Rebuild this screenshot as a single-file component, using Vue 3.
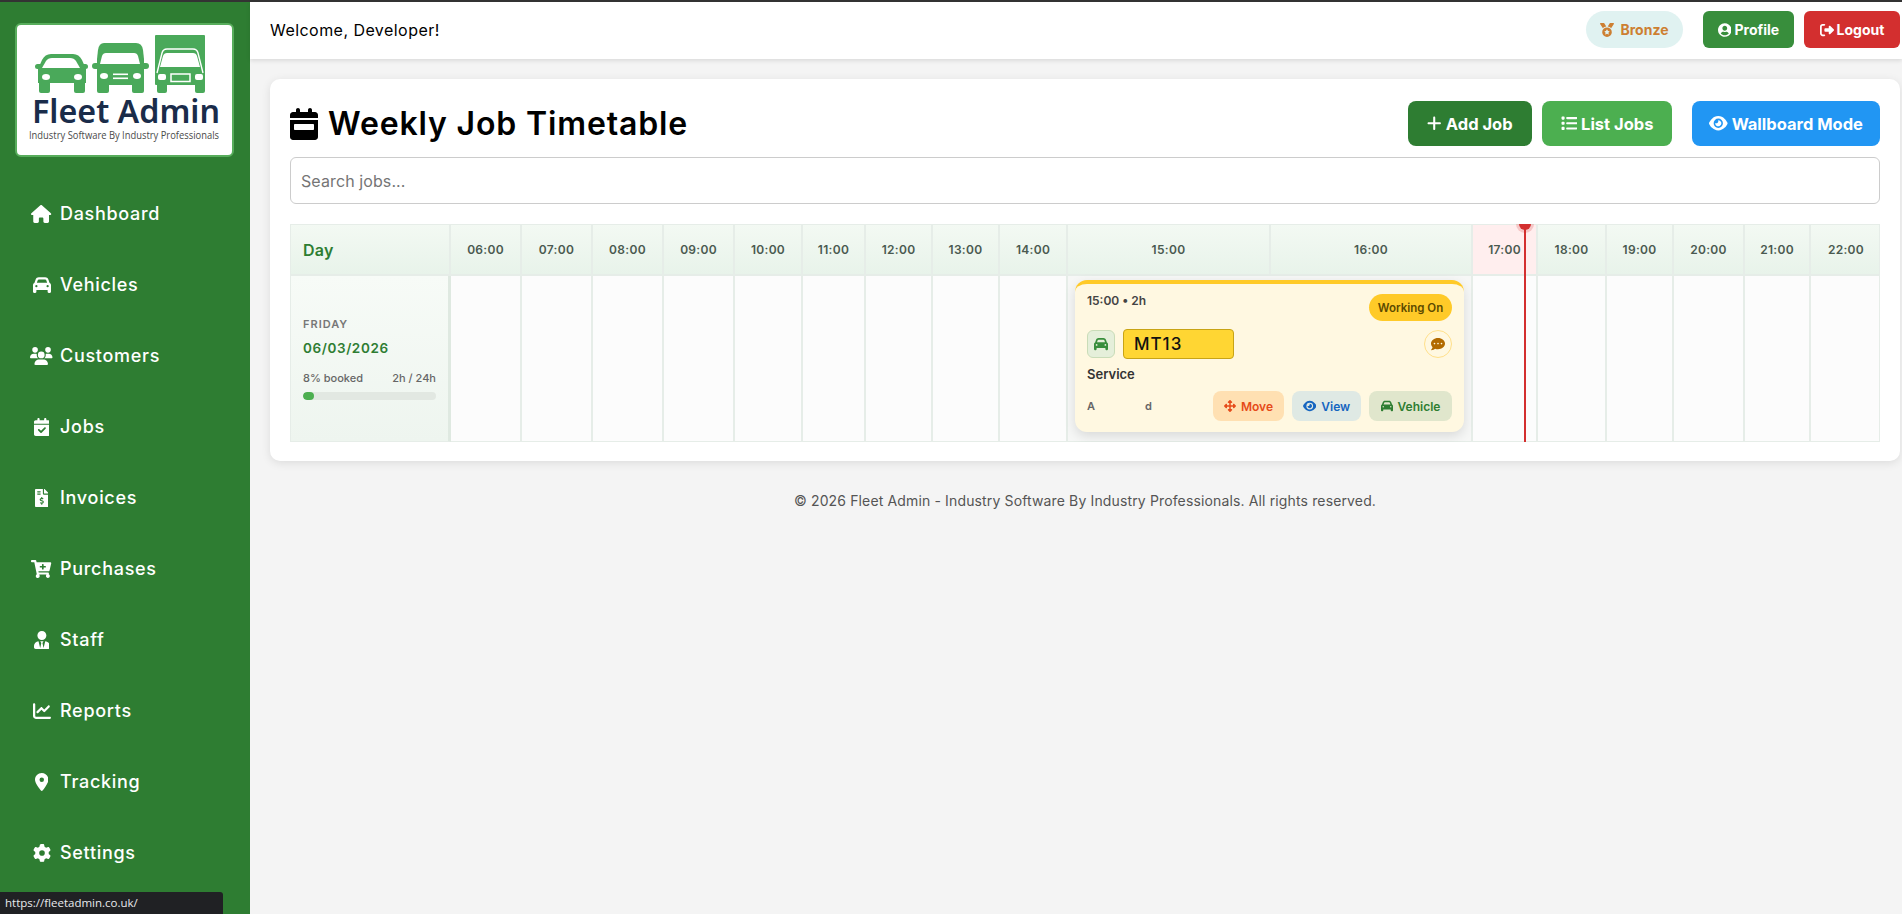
<script setup>
import { h } from "vue";

const icons = {
  home: [576, 512, "M575.8 255.5c0 18-15 32.1-32 32.1h-32l.7 160.2c0 2.7-.2 5.4-.5 8.1V472c0 22.1-17.9 40-40 40H456c-1.1 0-2.2 0-3.3-.1c-1.4 .1-2.8 .1-4.2 .1H416 392c-22.1 0-40-17.9-40-40V448 384c0-17.7-14.3-32-32-32H256c-17.7 0-32 14.3-32 32v64 24c0 22.1-17.9 40-40 40H160 128.1c-1.5 0-3-.1-4.5-.2c-1.2 .1-2.4 .2-3.6 .2H104c-22.1 0-40-17.9-40-40V360c0-.9 0-1.9 .1-2.8V287.6H32c-18 0-32-14-32-32.1c0-9 3-17 10-24L266.4 8c7-7 15-8 22-8s15 2 21 7L564.8 231.5c8 7 12 15 11 24z"],
  car: [512, 512, "M135.2 117.4L109.1 192H402.9l-26.1-74.6C372.3 104.6 360.2 96 346.6 96H165.4c-13.6 0-25.7 8.6-30.2 21.4zM39.6 196.8L74.8 96.3C88.3 57.8 124.6 32 165.4 32H346.6c40.8 0 77.1 25.8 90.6 64.3l35.2 100.5c23.2 9.6 39.6 32.5 39.6 59.2V400v48c0 17.7-14.3 32-32 32H448c-17.7 0-32-14.3-32-32V400H96v48c0 17.7-14.3 32-32 32H32c-17.7 0-32-14.3-32-32V400 256c0-26.7 16.4-49.6 39.6-59.2zM128 288a32 32 0 1 0 -64 0 32 32 0 1 0 64 0zm288 32a32 32 0 1 0 0-64 32 32 0 1 0 0 64z"],
  users: [640, 512, "M144 0a80 80 0 1 1 0 160A80 80 0 1 1 144 0zM512 0a80 80 0 1 1 0 160A80 80 0 1 1 512 0zM0 298.7C0 239.8 47.8 192 106.7 192h42.7c15.9 0 31 3.5 44.6 9.7c-1.3 7.2-1.9 14.7-1.9 22.3c0 38.2 16.8 72.5 43.3 96c-.2 0-.4 0-.7 0H21.3C9.6 320 0 310.4 0 298.7zM405.3 320c-.2 0-.4 0-.7 0c26.6-23.5 43.3-57.8 43.3-96c0-7.6-.7-15-1.9-22.3c13.6-6.3 28.7-9.7 44.6-9.7h42.7C592.2 192 640 239.8 640 298.7c0 11.8-9.6 21.3-21.3 21.3H405.3zM224 224a96 96 0 1 1 192 0 96 96 0 1 1 -192 0zM128 485.3C128 411.7 187.7 352 261.3 352H378.7C452.3 352 512 411.7 512 485.3c0 14.7-11.9 26.7-26.7 26.7H154.7c-14.7 0-26.7-11.9-26.7-26.7z"],
  calendarCheck: [448, 512, "M128 0c17.7 0 32 14.3 32 32V64H288V32c0-17.7 14.3-32 32-32s32 14.3 32 32V64h48c26.5 0 48 21.5 48 48v48H0V112C0 85.5 21.5 64 48 64H96V32c0-17.7 14.3-32 32-32zM0 192H448V464c0 26.5-21.5 48-48 48H48c-26.5 0-48-21.5-48-48V192zM329 305c9.4-9.4 9.4-24.6 0-33.9s-24.6-9.4-33.9 0l-95 95-47-47c-9.4-9.4-24.6-9.4-33.9 0s-9.4 24.6 0 33.9l64 64c9.4 9.4 24.6 9.4 33.9 0L329 305z"],
  invoice: [384, 512, "M377 105L279.1 7c-4.5-4.5-10.6-7-17-7H256v128h128v-6.1c0-6.3-2.5-12.4-7-16.9zm-153 31V0H24C10.7 0 0 10.7 0 24v464c0 13.3 10.7 24 24 24h336c13.3 0 24-10.7 24-24V160H248c-13.2 0-24-10.8-24-24zM64 72c0-4.42 3.58-8 8-8h80c4.42 0 8 3.58 8 8v16c0 4.42-3.58 8-8 8H72c-4.42 0-8-3.58-8-8V72zm0 80v-16c0-4.42 3.58-8 8-8h80c4.42 0 8 3.58 8 8v16c0 4.42-3.58 8-8 8H72c-4.42 0-8-3.58-8-8zm144 263.88V440c0 4.42-3.58 8-8 8h-16c-4.42 0-8-3.58-8-8v-24.29c-11.29-.58-22.27-4.52-31.37-11.35-3.9-2.93-4.1-8.77-.57-12.14l11.75-11.21c2.77-2.64 6.89-2.76 10.13-.73 3.87 2.42 8.26 3.72 12.82 3.72h28.11c6.5 0 11.8-5.92 11.8-13.19 0-5.95-3.61-11.19-8.77-12.73l-45-13.5c-18.59-5.58-31.58-23.42-31.58-43.39 0-24.52 19.05-44.44 42.67-45.07V232c0-4.42 3.58-8 8-8h16c4.42 0 8 3.58 8 8v24.29c11.29.58 22.27 4.51 31.37 11.35 3.9 2.93 4.1 8.77.57 12.14l-11.75 11.21c-2.77 2.64-6.89 2.76-10.13.73-3.87-2.43-8.26-3.72-12.82-3.72h-28.11c-6.5 0-11.8 5.92-11.8 13.19 0 5.95 3.61 11.19 8.77 12.73l45 13.5c18.59 5.58 31.58 23.42 31.58 43.39 0 24.53-19.05 44.44-42.67 45.07z"],
  cart: [576, 512, "M504.717 320H211.572l6.545 32h268.418c15.401 0 26.816 14.301 23.403 29.319l-5.517 24.276C523.112 414.668 536 433.828 536 456c0 31.202-25.519 56.444-56.824 55.994-29.823-.429-54.35-24.631-55.155-54.447-.44-16.287 6.085-31.049 16.803-41.548H231.176C241.553 426.165 248 440.326 248 456c0 31.813-26.528 57.431-58.67 55.938-28.54-1.325-51.751-24.385-53.251-52.917-1.158-22.034 10.436-41.455 28.051-51.586L93.883 64H24C10.745 64 0 53.255 0 40V24C0 10.745 10.745 0 24 0h102.529c11.401 0 21.228 8.021 23.513 19.19L159.208 64H551.99c15.401 0 26.816 14.301 23.403 29.319l-47.273 208C525.637 312.246 515.923 320 504.717 320zM408 168h-48v-40c0-8.837-7.163-16-16-16h-16c-8.837 0-16 7.163-16 16v40h-48c-8.837 0-16 7.163-16 16v16c0 8.837 7.163 16 16 16h48v40c0 8.837 7.163 16 16 16h16c8.837 0 16-7.163 16-16v-40h48c8.837 0 16-7.163 16-16v-16c0-8.837-7.163-16-16-16z"],
  userTie: [448, 512, "M224 256c70.7 0 128-57.3 128-128S294.7 0 224 0 96 57.3 96 128s57.3 128 128 128zm95.8 32.6L272 480l-32-136 32-56h-96l32 56-32 136-47.8-191.4C56.9 292 0 350.3 0 422.4V464c0 26.5 21.5 48 48 48h352c26.5 0 48-21.5 48-48v-41.6c0-72.1-56.9-130.4-128.2-133.8z"],
  chart: [512, 512, "M64 64c0-17.7-14.3-32-32-32S0 46.3 0 64V400c0 44.2 35.8 80 80 80H480c17.7 0 32-14.3 32-32s-14.3-32-32-32H80c-8.8 0-16-7.2-16-16V64zm406.6 86.6c12.5-12.5 12.5-32.8 0-45.3s-32.8-12.5-45.3 0L320 210.7l-57.4-57.4c-12.5-12.5-32.8-12.5-45.3 0l-112 112c-12.5 12.5-12.5 32.8 0 45.3s32.8 12.5 45.3 0L240 221.3l57.4 57.4c12.5 12.5 32.8 12.5 45.3 0l128-128z"],
  pin: [384, 512, "M215.7 499.2C267 435 384 279.4 384 192C384 86 298 0 192 0S0 86 0 192c0 87.4 117 243 168.3 307.2c12.3 15.3 35.1 15.3 47.4 0zM192 128a64 64 0 1 1 0 128 64 64 0 1 1 0-128z"],
  cog: [512, 512, "M495.9 166.6c3.2 8.7 .5 18.4-6.4 24.6l-43.3 39.4c1.1 8.3 1.7 16.8 1.7 25.4s-.6 17.1-1.7 25.4l43.3 39.4c6.9 6.2 9.6 15.9 6.4 24.6c-4.4 11.9-9.7 23.3-15.8 34.3l-4.7 8.1c-6.6 11-14 21.4-22.1 31.2c-5.9 7.2-15.7 9.6-24.5 6.8l-55.7-17.7c-13.4 10.3-28.2 18.9-44 25.4l-12.5 57.1c-2 9.1-9 16.3-18.2 17.8c-13.8 2.3-28 3.5-42.5 3.5s-28.7-1.2-42.5-3.5c-9.2-1.5-16.2-8.7-18.2-17.8l-12.5-57.1c-15.8-6.5-30.6-15.1-44-25.4L83.1 425.9c-8.8 2.8-18.6 .3-24.5-6.8c-8.1-9.8-15.5-20.2-22.1-31.2l-4.7-8.1c-6.1-11-11.4-22.4-15.8-34.3c-3.2-8.7-.5-18.4 6.4-24.6l43.3-39.4C64.6 273.1 64 264.6 64 256s.6-17.1 1.7-25.4L22.4 191.2c-6.9-6.2-9.6-15.9-6.4-24.6c4.4-11.9 9.7-23.3 15.8-34.3l4.7-8.1c6.6-11 14-21.4 22.1-31.2c5.9-7.2 15.7-9.6 24.5-6.8l55.7 17.7c13.4-10.3 28.2-18.9 44-25.4l12.5-57.1c2-9.1 9-16.3 18.2-17.8C227.3 1.2 241.5 0 256 0s28.7 1.2 42.5 3.5c9.2 1.5 16.2 8.7 18.2 17.8l12.5 57.1c15.8 6.5 30.6 15.1 44 25.4l55.7-17.7c8.8-2.8 18.6-.3 24.5 6.8c8.1 9.8 15.5 20.2 22.1 31.2l4.7 8.1c6.1 11 11.4 22.4 15.8 34.3zM256 336a80 80 0 1 0 0-160 80 80 0 1 0 0 160z"],
  week: [448, 512, "M128 0c17.7 0 32 14.3 32 32V64H288V32c0-17.7 14.3-32 32-32s32 14.3 32 32V64h48c26.5 0 48 21.5 48 48v48H0V112C0 85.5 21.5 64 48 64H96V32c0-17.7 14.3-32 32-32zM0 192H448V464c0 26.5-21.5 48-48 48H48c-26.5 0-48-21.5-48-48V192zm80 64c-8.8 0-16 7.2-16 16v64c0 8.8 7.2 16 16 16H368c8.8 0 16-7.2 16-16V272c0-8.8-7.2-16-16-16H80z"],
  medal: [512, 512, "M4.1 38.2C1.4 34.2 0 29.4 0 24.6C0 11 11 0 24.6 0H133.9c11.2 0 21.7 5.9 27.4 15.5l68.5 114.1c-48.2 6.1-91.3 28.6-123.4 61.9L4.1 38.2zm503.7 0L405.6 191.5c-32.1-33.3-75.2-55.8-123.4-61.9L350.7 15.5C356.5 5.9 366.9 0 378.1 0H487.4C501 0 512 11 512 24.6c0 4.8-1.4 9.6-4.1 13.6zM80 336a176 176 0 1 1 352 0A176 176 0 1 1 80 336zm184.4-94.9c-3.4-7-13.3-7-16.8 0l-22.4 45.4c-1.4 2.8-4 4.7-7 5.1L168 298.9c-7.7 1.1-10.7 10.5-5.2 16l36.3 35.4c2.2 2.2 3.2 5.2 2.7 8.3l-8.6 49.9c-1.3 7.6 6.7 13.5 13.6 9.9l44.8-23.6c2.7-1.4 6-1.4 8.7 0l44.8 23.6c6.9 3.6 14.9-2.2 13.6-9.9l-8.6-49.9c-.5-3 .5-6.1 2.7-8.3l36.3-35.4c5.6-5.4 2.5-14.8-5.2-16l-50.1-7.3c-3-.4-5.7-2.4-7-5.1l-22.4-45.4z"],
  user: [496, 512, "M248 8C111 8 0 119 0 256s111 248 248 248 248-111 248-248S385 8 248 8zm0 96c48.6 0 88 39.4 88 88s-39.4 88-88 88-88-39.4-88-88 39.4-88 88-88zm0 344c-58.7 0-111.3-26.6-146.5-68.2 18.8-35.4 55.6-59.8 98.5-59.8 2.4 0 4.8.4 7.1 1.1 13 4.2 26.6 6.9 40.9 6.9 14.3 0 28-2.7 40.9-6.9 2.3-.7 4.7-1.1 7.1-1.1 42.9 0 79.7 24.4 98.5 59.8C359.3 421.4 306.7 448 248 448z"],
  logout: [512, 512, "M377.9 105.9L500.7 228.7c7.2 7.2 11.3 17.1 11.3 27.3s-4.1 20.1-11.3 27.3L377.9 406.1c-6.4 6.4-15 9.9-24 9.9c-18.7 0-33.9-15.2-33.9-33.9l0-62.1-128 0c-17.7 0-32-14.3-32-32l0-64c0-17.7 14.3-32 32-32l128 0 0-62.1c0-18.7 15.2-33.9 33.9-33.9c9 0 17.6 3.6 24 9.9zM160 96L96 96c-17.7 0-32 14.3-32 32l0 256c0 17.7 14.3 32 32 32l64 0c17.7 0 32 14.3 32 32s-14.3 32-32 32l-64 0c-53 0-96-43-96-96L0 128C0 75 43 32 96 32l64 0c17.7 0 32 14.3 32 32s-14.3 32-32 32z"],
  plus: [448, 512, "M256 80c0-17.7-14.3-32-32-32s-32 14.3-32 32V224H48c-17.7 0-32 14.3-32 32s14.3 32 32 32H192V432c0 17.7 14.3 32 32 32s32-14.3 32-32V288H400c17.7 0 32-14.3 32-32s-14.3-32-32-32H256V80z"],
  list: [512, 512, "M40 48C26.7 48 16 58.7 16 72v48c0 13.3 10.7 24 24 24H88c13.3 0 24-10.7 24-24V72c0-13.3-10.7-24-24-24H40zM192 64c-17.7 0-32 14.3-32 32s14.3 32 32 32H480c17.7 0 32-14.3 32-32s-14.3-32-32-32H192zm0 160c-17.7 0-32 14.3-32 32s14.3 32 32 32H480c17.7 0 32-14.3 32-32s-14.3-32-32-32H192zm0 160c-17.7 0-32 14.3-32 32s14.3 32 32 32H480c17.7 0 32-14.3 32-32s-14.3-32-32-32H192zM16 232v48c0 13.3 10.7 24 24 24H88c13.3 0 24-10.7 24-24V232c0-13.3-10.7-24-24-24H40c-13.3 0-24 10.7-24 24zM40 368c-13.3 0-24 10.7-24 24v48c0 13.3 10.7 24 24 24H88c13.3 0 24-10.7 24-24V392c0-13.3-10.7-24-24-24H40z"],
  eye: [576, 512, "M288 32c-80.8 0-145.5 36.8-192.6 80.6C48.6 156 17.3 208 2.5 243.7c-3.3 7.9-3.3 16.7 0 24.6C17.3 304 48.6 356 95.4 399.4C142.5 443.2 207.2 480 288 480s145.5-36.8 192.6-80.6c46.8-43.5 78.1-95.4 93-131.1c3.3-7.9 3.3-16.7 0-24.6c-14.9-35.7-46.2-87.7-93-131.1C433.5 68.8 368.8 32 288 32zM144 256a144 144 0 1 1 288 0 144 144 0 1 1 -288 0zm144-64c0 35.3-28.7 64-64 64c-7.1 0-13.9-1.2-20.3-3.3c-5.5-1.8-11.9 1.6-11.7 7.4c.3 6.9 1.3 13.8 3.2 20.7c13.7 51.2 66.4 81.6 117.6 67.9s81.6-66.4 67.9-117.6c-11.1-41.5-47.8-69.4-88.6-71.1c-5.8-.2-9.2 6.1-7.4 11.7c2.1 6.4 3.3 13.2 3.3 20.3z"],
  comment: [512, 512, "M256 32C114.6 32 0 125.1 0 240c0 49.6 21.4 95 57 130.7C44.5 421.1 2.7 466 2.2 466.5c-2.2 2.3-2.8 5.7-1.5 8.7S4.8 480 8 480c66.3 0 116-31.8 140.6-51.4 32.7 12.3 69 19.4 107.4 19.4 141.4 0 256-93.1 256-208S397.4 32 256 32zM128 272c-17.7 0-32-14.3-32-32s14.3-32 32-32 32 14.3 32 32-14.3 32-32 32zm128 0c-17.7 0-32-14.3-32-32s14.3-32 32-32 32 14.3 32 32-14.3 32-32 32zm128 0c-17.7 0-32-14.3-32-32s14.3-32 32-32 32 14.3 32 32-14.3 32-32 32z"],
  move: [512, 512, "M278.6 9.4c-12.5-12.5-32.8-12.5-45.3 0l-64 64c-9.2 9.2-11.9 22.9-6.9 34.9s16.6 19.8 29.6 19.8h32v96H128V192c0-12.9-7.8-24.6-19.8-29.6s-25.7-2.2-34.9 6.9l-64 64c-12.5 12.5-12.5 32.8 0 45.3l64 64c9.2 9.2 22.9 11.9 34.9 6.9s19.8-16.6 19.8-29.6V288h96v96H192c-12.9 0-24.6 7.8-29.6 19.8s-2.2 25.7 6.9 34.9l64 64c12.5 12.5 32.8 12.5 45.3 0l64-64c9.2-9.2 11.9-22.9 6.9-34.9s-16.6-19.8-29.6-19.8H288V288h96v32c0 12.9 7.8 24.6 19.8 29.6s25.7 2.2 34.9-6.9l64-64c12.5-12.5 12.5-32.8 0-45.3l-64-64c-9.2-9.2-22.9-11.9-34.9-6.9s-19.8 16.6-19.8 29.6v32H288V128h32c12.9 0 24.6-7.8 29.6-19.8s2.2-25.7-6.9-34.9l-64-64z"]
};

const Icon = (props) => {
  const [w, ht, d] = icons[props.name];
  return h("svg", { viewBox: `0 0 ${w} ${ht}`, width: `${w / ht}em`, height: "1em", fill: "currentColor" }, [h("path", { d })]);
};
Icon.props = ["name"];

const navItems = [
  { label: "Dashboard", icon: "home" },
  { label: "Vehicles", icon: "car" },
  { label: "Customers", icon: "users" },
  { label: "Jobs", icon: "calendarCheck" },
  { label: "Invoices", icon: "invoice" },
  { label: "Purchases", icon: "cart" },
  { label: "Staff", icon: "userTie" },
  { label: "Reports", icon: "chart" },
  { label: "Tracking", icon: "pin" },
  { label: "Settings", icon: "cog" }
];

const beforeJob = ["06:00", "07:00", "08:00", "09:00", "10:00", "11:00", "12:00", "13:00", "14:00"];
const afterJob = ["17:00", "18:00", "19:00", "20:00", "21:00", "22:00"];
const bookedPercent = 8;
</script>

<template>
  <div class="page">
    <div class="top-edge"></div>
    <div class="shell">
      <aside class="sidebar">
        <div class="logo">
          <svg viewBox="0 0 215 130" width="215" height="130">
            <g transform="translate(-2 -2)">
              <g fill="#4aa95a">
                <path d="M34 31H58Q64 31 67 37L71 46V60H23V46L27 37Q30 31 36 31Z" />
                <rect x="20" y="41" width="9" height="5" rx="2.5" />
                <rect x="64" y="41" width="9" height="5" rx="2.5" />
                <rect x="24" y="56" width="11" height="14" rx="2" />
                <rect x="59" y="56" width="11" height="14" rx="2" />

                <path d="M89 20H121Q127 20 128 27L129 36V62H82V36L83 27Q84 20 89 20Z" />
                <rect x="77" y="40" width="9" height="6" rx="3" />
                <rect x="125" y="40" width="9" height="6" rx="3" />
                <rect x="82" y="58" width="12" height="12" rx="2" />
                <rect x="117" y="58" width="12" height="12" rx="2" />

                <rect x="140" y="12" width="50" height="50" rx="1" />
                <rect x="142" y="58" width="10" height="12" rx="2" />
                <rect x="180" y="58" width="10" height="12" rx="2" />
              </g>
              <g fill="#fff">
                <path d="M37 35H55Q59 35 61 38L65 45H27L31 38Q33 35 37 35Z" />
                <ellipse cx="31" cy="54" rx="4" ry="3" />
                <ellipse cx="63" cy="54" rx="4" ry="3" />
                <path d="M91 30H119Q122 30 123 33L125 41H85L87 33Q88 30 91 30Z" />
                <ellipse cx="89" cy="53" rx="4" ry="3" />
                <ellipse cx="122" cy="53" rx="4" ry="3" />
                <rect x="98" y="50.5" width="15" height="1.6" />
                <rect x="98" y="54.5" width="15" height="1.6" />
                <path d="M152 30H178Q181 30 182 33L185 44H145L148 33Q149 30 152 30Z" />
                <rect x="143" y="51" width="8" height="6" rx="2" />
                <rect x="180" y="51" width="8" height="6" rx="2" />
              </g>
              <path d="M142 50L147 30Q148 26 152 26H178Q182 26 183 30L188 50" fill="none" stroke="#fff" stroke-width="1.4" />
              <rect x="156" y="51" width="19" height="7.5" fill="none" stroke="#fff" stroke-width="1.5" />
            </g>
            <text x="15" y="98" textLength="188" lengthAdjust="spacingAndGlyphs" class="logo-name">Fleet Admin</text>
            <text x="12" y="114" textLength="190" lengthAdjust="spacingAndGlyphs" class="logo-tag">Industry Software By Industry Professionals</text>
          </svg>
        </div>
        <nav class="nav">
          <a v-for="item in navItems" :key="item.label" class="nav-item" href="#">
            <span class="nav-icon"><Icon :name="item.icon" /></span>
            <span>{{ item.label }}</span>
          </a>
        </nav>
      </aside>

      <main class="main">
        <header class="topbar">
          <span class="welcome">Welcome, Developer!</span>
          <div class="topbar-actions">
            <span class="tier"><Icon name="medal" />Bronze</span>
            <button class="top-btn profile"><Icon name="user" />Profile</button>
            <button class="top-btn logout"><Icon name="logout" />Logout</button>
          </div>
        </header>

        <div class="content">
          <section class="card">
            <div class="title-row">
              <h1><Icon name="week" /><span>Weekly Job Timetable</span></h1>
              <div class="title-actions">
                <button class="action add"><Icon name="plus" />Add Job</button>
                <button class="action list"><Icon name="list" />List Jobs</button>
                <button class="action wall"><Icon name="eye" />Wallboard Mode</button>
              </div>
            </div>

            <input class="search" type="text" placeholder="Search jobs..." />

            <div class="timetable">
              <div class="head day-head">Day</div>
              <div v-for="t in beforeJob" :key="t" class="head">{{ t }}</div>
              <div class="head">15:00</div>
              <div class="head">16:00</div>
              <div
                v-for="t in afterJob"
                :key="t"
                class="head"
                :class="{ current: t === '17:00' }"
              >{{ t }}</div>

              <div class="day-cell">
                <div class="weekday">FRIDAY</div>
                <div class="date">06/03/2026</div>
                <div class="booked">
                  <span>{{ bookedPercent }}% booked</span>
                  <span>2h / 24h</span>
                </div>
                <div class="bar"><div class="bar-fill" :style="{ width: bookedPercent + '%' }"></div></div>
              </div>

              <div v-for="t in beforeJob" :key="t" class="slot"></div>

              <div class="slot job-slot">
                <article class="job">
                  <div class="job-top">
                    <span class="job-time">15:00 • 2h</span>
                    <span class="job-status">Working On</span>
                  </div>
                  <div class="job-vehicle">
                    <span class="car-tile"><Icon name="car" /></span>
                    <span class="plate">MT13</span>
                    <span class="note"><Icon name="comment" /></span>
                  </div>
                  <div class="job-type">Service</div>
                  <div class="job-bottom">
                    <span class="job-who"><span>A</span><span>d</span></span>
                    <button class="job-btn move"><Icon name="move" />Move</button>
                    <button class="job-btn view"><Icon name="eye" />View</button>
                    <button class="job-btn vehicle"><Icon name="car" />Vehicle</button>
                  </div>
                </article>
              </div>

              <div v-for="t in afterJob" :key="t" class="slot"></div>

              <div class="now-line"></div>
            </div>
          </section>

          <footer class="footer">© 2026 Fleet Admin - Industry Software By Industry Professionals. All rights reserved.</footer>
        </div>
      </main>
    </div>

    <div class="link-status">https://fleetadmin.co.uk/</div>
  </div>
</template>

<style>
html, body {
  margin: 0;
  overflow: hidden;
}
</style>

<style scoped>
.page {
  height: 914px;
  display: flex;
  flex-direction: column;
  position: relative;
  overflow: hidden;
  font-family: Inter, "Liberation Sans", sans-serif;
  background: #f4f4f4;
  color: #000;
}

.top-edge {
  height: 2px;
  background: #333;
  flex: none;
}

.shell {
  flex: 1;
  display: flex;
  min-height: 0;
}

.sidebar {
  width: 250px;
  flex: none;
  background: #2e7d32;
  display: flex;
  flex-direction: column;
}

.logo {
  margin: 21px 16px 0 15px;
  height: 130px;
  background: #fff;
  border: 2px solid #58ad5c;
  border-radius: 6px;
}

.logo svg {
  display: block;
}

.logo-name {
  font-family: "Noto Sans", sans-serif;
  font-size: 33px;
  font-weight: 600;
  fill: #1a2c4a;
}

.logo-tag {
  font-family: "Open Sans", sans-serif;
  font-size: 10.5px;
  fill: #4a4a4a;
}

.nav {
  margin-top: 21px;
  display: flex;
  flex-direction: column;
}

.nav-item {
  height: 71px;
  display: flex;
  align-items: center;
  padding-left: 30px;
  gap: 7px;
  color: #fff;
  text-decoration: none;
  font-size: 18px;
  font-weight: 500;
  letter-spacing: 0.7px;
}

.nav-icon {
  width: 23px;
  display: flex;
  justify-content: center;
  font-size: 18px;
}

.main {
  flex: 1;
  min-width: 0;
  display: flex;
  flex-direction: column;
}

.topbar {
  height: 57px;
  flex: none;
  background: #fff;
  box-shadow: 0 2px 4px rgba(0, 0, 0, 0.1);
  display: flex;
  align-items: center;
  justify-content: space-between;
  padding: 0 2px 0 20px;
}

.welcome {
  font-size: 16px;
  letter-spacing: 0.45px;
  margin-top: -2px;
}

.topbar-actions {
  display: flex;
  align-items: center;
  gap: 10px;
  margin-top: -2px;
}

.tier {
  width: 97px;
  height: 37px;
  margin-right: 10px;
  border-radius: 19px;
  background: #e0f2f1;
  color: #cd7f32;
  font-size: 14px;
  font-weight: 700;
  display: flex;
  align-items: center;
  justify-content: center;
  gap: 6px;
}

.top-btn {
  height: 37px;
  border: none;
  border-radius: 6px;
  color: #fff;
  font-family: inherit;
  font-size: 14px;
  font-weight: 700;
  display: flex;
  align-items: center;
  justify-content: center;
  gap: 3px;
}

.profile {
  width: 91px;
  background: #388e3c;
}

.logout {
  width: 96px;
  background: #d32f2f;
}

.content {
  flex: 1;
  padding: 20px 2px 0 20px;
}

.card {
  background: #fff;
  border-radius: 10px;
  box-shadow: 0 2px 10px rgba(0, 0, 0, 0.1);
  padding: 22px 20px 19px;
}

.title-row {
  display: flex;
  align-items: center;
  justify-content: space-between;
  height: 45px;
}

h1 {
  margin: 0;
  display: flex;
  align-items: center;
  gap: 10px;
  font-size: 32px;
  font-weight: 600;
  letter-spacing: 0.85px;
}

.title-actions {
  display: flex;
  gap: 10px;
}

.action {
  height: 45px;
  border: none;
  border-radius: 8px;
  color: #fff;
  font-family: inherit;
  font-size: 16.5px;
  font-weight: 700;
  display: flex;
  align-items: center;
  justify-content: center;
  gap: 4px;
}

.add {
  width: 124px;
  background: #2e7d32;
}

.list {
  width: 130px;
  background: #4caf50;
}

.wall {
  width: 188px;
  margin-left: 10px;
  background: #2196f3;
}

.search {
  display: block;
  box-sizing: border-box;
  width: 100%;
  height: 47px;
  margin-top: 11px;
  padding: 0 10px;
  border: 1px solid #ccc;
  border-radius: 6px;
  font-family: inherit;
  font-size: 16px;
  letter-spacing: 0.1px;
  outline: none;
}

.search::placeholder {
  color: #757575;
}

.timetable {
  position: relative;
  overflow: hidden;
  margin-top: 20px;
  display: grid;
  grid-template-columns: 160px 71px 71px 71px 71px 68px 63px 67px 67px 68px 203px 202px 65px 69px 67px 71px 66px 70px;
  grid-template-rows: 52px 166px;
  box-sizing: border-box;
  border-left: 1px solid #e6ede8;
  border-right: 1px solid #e6ede8;
}

.head {
  display: flex;
  align-items: center;
  justify-content: center;
  box-sizing: border-box;
  background: linear-gradient(#f3f9f3, #e8f3ea);
  border-top: 1px solid #e6ede8;
  border-bottom: 2px solid #e6ede8;
  border-right: 2px solid #e6ede8;
  color: #4a5a50;
  font-size: 12px;
  font-weight: 600;
  letter-spacing: 0.3px;
}

.head.current {
  background: #ffeeee;
}

.day-head {
  justify-content: flex-start;
  padding-left: 12px;
  color: #2e7d32;
  font-size: 16px;
}

.head:nth-child(18),
.slot:last-of-type {
  border-right: none;
}

.day-cell {
  display: flex;
  flex-direction: column;
  justify-content: center;
  box-sizing: border-box;
  padding: 0 12px 0 12px;
  background: linear-gradient(#f7fbf7, #eef5ef);
  border-right: 3px solid #dfe9e1;
  border-bottom: 1px solid #e6ede8;
}

.weekday {
  color: #777;
  font-size: 11px;
  font-weight: 600;
  letter-spacing: 1px;
}

.date {
  margin-top: 9px;
  color: #2e7d32;
  font-size: 13.5px;
  font-weight: 600;
  letter-spacing: 0.6px;
}

.booked {
  margin-top: 15px;
  display: flex;
  justify-content: space-between;
  color: #666;
  font-size: 11px;
  font-weight: 500;
}

.bar {
  margin-top: 7px;
  height: 8px;
  border-radius: 4px;
  background: #e2e8e2;
  overflow: hidden;
}

.bar-fill {
  height: 100%;
  border-radius: 4px;
  background: #4caf50;
}

.slot {
  box-sizing: border-box;
  background: #fcfcfc;
  border-right: 2px solid #e6ede8;
  border-bottom: 1px solid #e6ede8;
}

.job-slot {
  grid-column: span 2;
  padding: 4px 7px 0 7px;
  background: #f6f7f6;
}

.job {
  box-sizing: border-box;
  height: 152px;
  padding: 10px 12px;
  background: #fff8e1;
  border-top: 4px solid #ffca28;
  border-radius: 12px;
  box-shadow: 0 4px 12px rgba(0, 0, 0, 0.12);
}

.job-top {
  display: flex;
  justify-content: space-between;
  align-items: flex-start;
}

.job-time {
  color: #444;
  font-size: 12px;
  font-weight: 600;
  line-height: 14px;
}

.job-status {
  width: 83px;
  height: 27px;
  border-radius: 14px;
  background: #ffca28;
  color: #5d4a00;
  font-size: 11.5px;
  font-weight: 600;
  display: flex;
  align-items: center;
  justify-content: center;
}

.job-vehicle {
  margin-top: 8px;
  height: 30px;
  display: flex;
  align-items: center;
}

.car-tile {
  box-sizing: border-box;
  width: 28px;
  height: 28px;
  border: 1px solid #c9dcb8;
  border-radius: 6px;
  background: #e5efda;
  color: #388e3c;
  font-size: 14px;
  display: flex;
  align-items: center;
  justify-content: center;
}

.plate {
  box-sizing: border-box;
  width: 111px;
  height: 30px;
  margin-left: 8px;
  padding-left: 10px;
  border: 1px solid #c8a415;
  border-radius: 4px;
  background: #ffd633;
  color: #111;
  font-size: 17px;
  font-weight: 500;
  letter-spacing: 1px;
  line-height: 28px;
}

.note {
  box-sizing: border-box;
  width: 28px;
  height: 28px;
  margin-left: auto;
  border: 1px solid #ffe08a;
  border-radius: 50%;
  color: #b26a00;
  font-size: 14px;
  display: flex;
  align-items: center;
  justify-content: center;
}

.job-type {
  margin-top: 6px;
  color: #333;
  font-size: 13px;
  font-weight: 600;
  line-height: 18px;
}

.job-bottom {
  margin-top: 8px;
  display: flex;
  align-items: center;
  gap: 8px;
}

.job-who {
  width: 66px;
  margin-right: auto;
  display: flex;
  gap: 50px;
  color: #666;
  font-size: 11px;
  font-weight: 600;
}

.job-btn {
  height: 30px;
  padding: 0;
  border: none;
  border-radius: 8px;
  font-family: inherit;
  font-size: 12px;
  font-weight: 600;
  display: flex;
  align-items: center;
  justify-content: center;
  gap: 5px;
}

.move {
  width: 71px;
  background: #ffe0b2;
  color: #e64a19;
}

.view {
  width: 69px;
  background: #dfe9e4;
  color: #1565c0;
}

.vehicle {
  width: 83px;
  background: #e0e6cc;
  color: #2e7d32;
}

.now-line {
  position: absolute;
  left: 1233px;
  top: 0;
  bottom: 0;
  width: 2px;
  background: #d32f2f;
}

.now-line::before {
  content: "";
  position: absolute;
  left: -5px;
  top: -6px;
  width: 12px;
  height: 12px;
  border-radius: 50%;
  background: #d32f2f;
  box-shadow: 0 0 0 3px rgba(211, 47, 47, 0.2);
}

.footer {
  margin-top: 30px;
  text-align: center;
  color: #555;
  font-size: 14px;
  letter-spacing: 0.14px;
  line-height: 20px;
}

.link-status {
  position: absolute;
  left: 0;
  bottom: 0;
  width: 223px;
  height: 22px;
  background: #202124;
  border-top-right-radius: 3px;
  color: #e8eaed;
  font-family: "Open Sans", sans-serif;
  font-size: 11.5px;
  line-height: 22px;
  padding-left: 5px;
  box-sizing: border-box;
  white-space: nowrap;
}
</style>
